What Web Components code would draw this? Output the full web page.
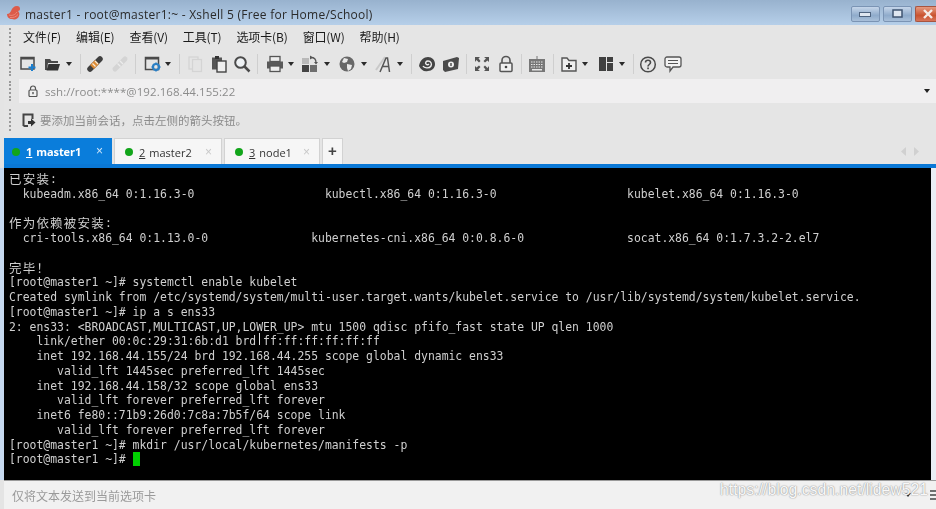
<!DOCTYPE html>
<html>
<head>
<meta charset="utf-8">
<title>Xshell 5</title>
<style>
  html, body { margin: 0; padding: 0; background: #e4e4e4; overflow: hidden; }
  body { font-family: "Noto Sans", "Noto Sans CJK SC", sans-serif; }
</style>
</head>
<body>
<xshell-window>
  <title-bar slot="top">master1 - root@master1:~ - Xshell 5 (Free for Home/School)</title-bar>
  <menu-bar slot="top"></menu-bar>
  <tool-bar slot="top"></tool-bar>
  <address-bar slot="top">ssh://root:****@192.168.44.155:22</address-bar>
  <session-bar slot="top">要添加当前会话，点击左侧的箭头按钮。</session-bar>
  <tab-strip slot="top">
    <session-tab num="1" name="master1" active style="width:108px"></session-tab>
    <session-tab num="2" name="master2" style="width:108px"></session-tab>
    <session-tab num="3" name="node1" style="width:96px"></session-tab>
  </tab-strip>
  <term-view></term-view>
  <compose-bar slot="bottom">仅将文本发送到当前选项卡</compose-bar>
</xshell-window>

<script>
  // shared grip used at the left of each docked bar
  const grip = `<span class="grip"></span>`;
  const gripCss = `
    .grip { width: 2px; align-self: center; border-left: 2px dotted #9a9a9a; margin-left: 5px; flex: none; }
  `;

  class XshellWindow extends HTMLElement {
    constructor() {
      super();
      this.attachShadow({ mode: 'open' });
      this.shadowRoot.innerHTML = `
        <style>
          :host { display: flex; flex-direction: column; width: 936px; height: 509px; overflow: hidden; position: relative; background: #e4e4e4; }
          .body { flex: 1; display: flex; min-height: 0; }
          .edge { width: 4px; background: #c6d9ef; flex: none; }
          .side { width: 5px; background: #e9eef4; flex: none; }
          .main { flex: 1; min-width: 0; }
          .mark { position: absolute; left: 720px; top: 481px; font: 15.8px "Liberation Sans", sans-serif; color: #f8f8f8; text-shadow: 0 0 1.5px #8f8f8f, 0 0 1px #a5a5a5; white-space: nowrap; }
          .wrap { filter: blur(.35px); display: flex; flex-direction: column; height: 100%; }
        </style>
        <div class="wrap">
          <slot name="top"></slot>
          <div class="body">
            <div class="edge"></div>
            <div class="main"><slot></slot></div>
            <div class="side"></div>
          </div>
          <slot name="bottom"></slot>
        </div>
        <div class="mark">https://blog.csdn.net/lidew521</div>
      `;
    }
  }

  class TitleBar extends HTMLElement {
    constructor() {
      super();
      this.attachShadow({ mode: 'open' });
      this.shadowRoot.innerHTML = `
        <style>
          :host { display: flex; align-items: center; height: 25px; flex: none; background: linear-gradient(#98b2ce, #b6cfe9); color: #2a2a2a; font: 12px "Open Sans", sans-serif; box-sizing: border-box; padding-left: 6px; }
          svg.logo { margin-right: 4px; flex: none; }
          .t { flex: 1; white-space: nowrap; letter-spacing: .26px; padding-top: 3px; }
          .btns { display: flex; align-self: flex-start; margin-top: 6px; gap: 3px; }
          .b { width: 29px; height: 16px; box-sizing: border-box; border: 1px solid #7b94b4; border-radius: 2px; background: linear-gradient(#c6d6ea, #8fabcb 60%, #a9c0da); display: flex; align-items: center; justify-content: center; }
          .b.x { width: 21px; border-right: 0; border-radius: 2px 0 0 2px; border-color: #a8543f; background: linear-gradient(#e59a80, #c9532f 60%, #d8755a); justify-content: flex-start; padding-left: 7px; }
        </style>
        <svg class="logo" width="15" height="15" viewBox="0 0 15 15">
          <path d="M1 9c2 0 3-1 4-3 1-3 3-5 6-5 2 0 3 1 3 3 0 1-1 2-2 2 1 1 2 3 1 5-1 3-4 4-7 3-3 0-5-2-5-5z" fill="#dc5b4a"/>
          <path d="M3 10c3 1 6 0 8-3M4 12.500c3 .5 6-.5 8-3" fill="none" stroke="#ee9484" stroke-width=".8"/>
        </svg>
        <span class="t"><slot></slot></span>
        <div class="btns">
          <div class="b"><svg width="13" height="5"><rect x=".5" y=".5" width="11" height="4" fill="#dfe7f1" stroke="#4f6480"/></svg></div>
          <div class="b"><svg width="12" height="10"><rect x="1" y="1" width="9" height="7" fill="#dfe7f1" stroke="#3f5470" stroke-width="1.500"/></svg></div>
          <div class="b x"><svg width="11" height="10"><path d="M1 1l8 8M9 1l-8 8" stroke="#f5ece8" stroke-width="2.400"/></svg></div>
        </div>
      `;
    }
  }

  class MenuBar extends HTMLElement {
    constructor() {
      super();
      this.attachShadow({ mode: 'open' });
      const items = ['文件(F)', '编辑(E)', '查看(V)', '工具(T)', '选项卡(B)', '窗口(W)', '帮助(H)'];
      this.shadowRoot.innerHTML = `
        <style>
          :host { display: flex; align-items: center; height: 23px; flex: none; margin-left: 4px; background: #e5e5e5; font: 12px "Noto Sans CJK SC", "Noto Sans", sans-serif; color: #1b1b1b; }
          ${gripCss}
          .grip { height: 18px; }
          .items { display: flex; gap: 15px; margin-left: 10px; letter-spacing: -.14px; }
        </style>
        ${grip}
        <div class="items">${items.map(i => `<span>${i}</span>`).join('')}</div>
      `;
    }
  }

  // toolbar icons, all drawn on a 18x18 box
  const icons = {
    newsess: `<rect x="2" y="2.500" width="13" height="11.500" fill="none" stroke="#4a4a4a" stroke-width="1.500"/><rect x="2" y="2" width="13" height="2.500" fill="#4a4a4a"/><path d="M13 9v7M9.500 12.500h7" stroke="#1b7fd0" stroke-width="2"/>`,
    open: `<path d="M2 15V4h5l1.500 2H15v2H5l-1 7z" fill="#4a4a4a"/><path d="M3.500 15.500l2-6.500H17l-2 6.500z" fill="#333"/>`,
    edit: `<path d="M4 14L14 4" stroke="#3f3f3f" stroke-width="5.500" stroke-linecap="round"/><path d="M6 12l5-5" stroke="#dc8a34" stroke-width="5.500"/><path d="M6.500 8.500l3 3M9 6l3 3" stroke="#f8ecd6" stroke-width="1.200"/>`,
    plug: `<path d="M4 14L14 4" stroke="#d4d4d4" stroke-width="5" stroke-linecap="round"/><path d="M6.500 8.500l3 3M9 6l3 3" stroke="#ececec" stroke-width="1.200"/>`,
    prefs: `<rect x="1.500" y="2.500" width="13" height="12" fill="none" stroke="#4a4a4a" stroke-width="1.500"/><rect x="1.500" y="2" width="13" height="2.500" fill="#4a4a4a"/><circle cx="12" cy="12" r="3" fill="none" stroke="#2b7fc4" stroke-width="2.200"/><path d="M12 7.500v2M12 14.500v2M7.500 12h2M14.500 12h2" stroke="#2b7fc4" stroke-width="1.500"/>`,
    copy: `<rect x="3" y="2" width="9" height="12" fill="none" stroke="#d4d4d4" stroke-width="1.300"/><rect x="6.500" y="4.500" width="9" height="12" fill="#e4e4e4" stroke="#d4d4d4" stroke-width="1.300"/>`,
    paste: `<rect x="2" y="2.500" width="10" height="12" fill="#555"/><rect x="5" y="1" width="4" height="3" fill="#333"/><rect x="7" y="6" width="9" height="11" fill="#eee" stroke="#444" stroke-width="1.400"/>`,
    search: `<circle cx="7.500" cy="7.500" r="5.300" fill="#eef1f4" stroke="#4a4a4a" stroke-width="2"/><path d="M11.500 11.500l5 5" stroke="#4a4a4a" stroke-width="2.500"/>`,
    print: `<rect x="4" y="1.500" width="10" height="5" fill="#eee" stroke="#555" stroke-width="1.300"/><rect x="1" y="6.500" width="16" height="7" fill="#5a5a5a"/><rect x="4" y="11" width="10" height="5.500" fill="#eee" stroke="#555" stroke-width="1.300"/>`,
    transfer: `<rect x="1" y="3" width="7" height="6" fill="#b9b9b9"/><rect x="1" y="10" width="7" height="7" fill="#444"/><rect x="9" y="10" width="7" height="7" fill="#6e6e6e"/><path d="M10 2.500c3 0 5 2 5 5" fill="none" stroke="#555" stroke-width="1.300"/><path d="M9 .5v4l3-2zM13 7h4l-2 2.500z" fill="#555"/>`,
    globe: `<circle cx="9" cy="9" r="7.500" fill="#686868"/><path d="M6 3l4 1-1 3-3 1-2-1zM9 9l5 1-1 4-3 2-1-3z" fill="#eaeaea"/>`,
    font: `<path d="M2 15L11 2" stroke="#c9c9c9" stroke-width="2"/><path d="M6 17L12 3h1.500l2 14M8.500 11.500h6.500" fill="none" stroke="#555" stroke-width="1.500"/>`,
    shell: `<path d="M1 11c1-6 5-9 9-9 4 0 7 3 7 7 0 4-3 7-7 7-4 1-7-1-9-5z" fill="#444"/><path d="M5 11c1 2 6 3 8 0 1-2 0-5-3-5-2 0-3 2-2 3 1 1 2 1 3 0" fill="none" stroke="#eee" stroke-width="1.400"/>`,
    card: `<path d="M1 6l14-4 2 1-1 11-13 3-2-2z" fill="#4a4a4a"/><circle cx="9" cy="9.500" r="3" fill="#eee"/><path d="M9 8v3" stroke="#444" stroke-width="1.400"/>`,
    full: `<path d="M2 2h5L5.500 3.500 7.500 6 6 7.500 3.500 5 2 7zM16 2v5l-1.500-1.500L12 7.500 10.500 6l2.500-2.500L11 2zM2 16v-5l1.500 1.500L6 10.500 7.500 12 5 14.500 7 16zM16 16h-5l1.500-1.500L10.500 12l1.500-1.500 2.500 2.500L16 11z" fill="#555"/>`,
    lock: `<path d="M5 8V5.500a4 4 0 018 0V8" fill="none" stroke="#555" stroke-width="1.600"/><rect x="3" y="8" width="12" height="8.500" rx="1" fill="#f0f0f0" stroke="#555" stroke-width="1.500"/><circle cx="9" cy="12" r="1.300" fill="#444"/>`,
    keyboard: `<path d="M9 1v4" stroke="#777" stroke-width="1"/><rect x="1" y="4" width="16" height="13" fill="#777"/><path d="M3 7h12M3 9.500h12M3 12h12" stroke="#e8e8e8" stroke-width="1.200" stroke-dasharray="1.500 1"/><rect x="4" y="14" width="10" height="1.500" fill="#e8e8e8"/>`,
    folder: `<path d="M2 3h5l2 2.500h7V16H2z" fill="#eee" stroke="#555" stroke-width="1.400"/><path d="M9 8v6M6 11h6" stroke="#333" stroke-width="1.800"/>`,
    layout: `<rect x="2" y="2" width="7" height="14" fill="#404040"/><rect x="10" y="2" width="6" height="5" fill="#404040"/><rect x="10" y="8" width="6" height="8" fill="#404040"/>`,
    help: `<circle cx="9" cy="9.500" r="7.300" fill="none" stroke="#4a4a4a" stroke-width="1.500"/><path d="M6.500 7.500c0-3 5-3 5 0 0 2-2.500 2-2.500 4" fill="none" stroke="#4a4a4a" stroke-width="1.600"/><rect x="8.200" y="12.500" width="1.700" height="1.700" fill="#4a4a4a"/>`,
    chat: `<path d="M3 2h12a2 2 0 012 2v6a2 2 0 01-2 2H9l-3 4v-4H3a2 2 0 01-2-2V4a2 2 0 012-2z" fill="#f2f2f2" stroke="#555" stroke-width="1.300"/><path d="M4 5.500h10M4 8.500h10" stroke="#555" stroke-width="1.200"/>`
  };

  // [kind, gap before it]
  const toolItems = [
    ['newsess', 0], ['open', 6], ['caret', 4], ['sep', 7],
    ['edit', 5], ['plug', 7], ['sep', 6],
    ['prefs', 8], ['caret', 2], ['sep', 7],
    ['copy', 6], ['paste', 6], ['search', 5], ['sep', 6],
    ['print', 8], ['caret', 3], ['transfer', 6], ['caret', 4], ['globe', 7], ['caret', 4], ['font', 6], ['caret', 4], ['sep', 7],
    ['shell', 6], ['card', 6], ['sep', 6],
    ['full', 6], ['lock', 6], ['sep', 6],
    ['keyboard', 6], ['sep', 7],
    ['folder', 6], ['caret', 3], ['layout', 8], ['caret', 3], ['sep', 7],
    ['help', 5], ['chat', 7]
  ];

  class ToolBar extends HTMLElement {
    constructor() {
      super();
      this.attachShadow({ mode: 'open' });
      const html = toolItems.map(([kind, gap]) => {
        if (kind === 'sep') return `<span class="sep" style="margin-left:${gap}px"></span>`;
        if (kind === 'caret') return `<svg class="caret" style="margin-left:${gap}px" width="8" height="4"><path d="M1 0h6L4 4z" fill="#2a2a2a"/></svg>`;
        return `<svg style="margin-left:${gap}px" width="18" height="18" viewBox="0 0 18 18">${icons[kind]}</svg>`;
      }).join('');
      this.shadowRoot.innerHTML = `
        <style>
          :host { display: flex; align-items: center; height: 31px; flex: none; box-sizing: border-box; padding-top: 1px; margin-left: 4px; background: #e5e5e5; }
          ${gripCss}
          .grip { height: 24px; }
          .items { display: flex; align-items: center; margin-left: 6px; }
          svg { flex: none; display: block; }
          .sep { width: 1px; height: 20px; background: #cfcfcf; flex: none; }
        </style>
        ${grip}
        <div class="items">${html}</div>
      `;
    }
  }

  class AddressBar extends HTMLElement {
    constructor() {
      super();
      this.attachShadow({ mode: 'open' });
      this.shadowRoot.innerHTML = `
        <style>
          :host { display: flex; align-items: center; height: 24px; flex: none; margin-left: 4px; background: #e5e5e5; font: 11.5px "Open Sans", sans-serif; color: #8b8b8b; }
          ${gripCss}
          .grip { height: 20px; }
          .in { flex: 1; height: 100%; margin-left: 6px; background: #f0eff0; display: flex; align-items: center; padding-left: 9px; }
          svg.l { margin-right: 7px; }
          .t { flex: 1; letter-spacing: .06px; padding-top: 1px; }
          svg.c { margin-right: 6px; }
        </style>
        ${grip}
        <div class="in">
          <svg class="l" width="10" height="12" viewBox="0 0 10 12"><path d="M2.500 5V3.500a2.500 2.500 0 015 0V5" fill="none" stroke="#555" stroke-width="1.200"/><rect x="1" y="5" width="8" height="6.500" rx="1" fill="#f0f0f0" stroke="#555" stroke-width="1.200"/><rect x="4.300" y="7" width="1.400" height="2.200" fill="#555"/></svg>
          <span class="t"><slot></slot></span>
          <svg class="c" width="6" height="4"><path d="M0 0h6L3 4z" fill="#222"/></svg>
        </div>
      `;
    }
  }

  class SessionBar extends HTMLElement {
    constructor() {
      super();
      this.attachShadow({ mode: 'open' });
      this.shadowRoot.innerHTML = `
        <style>
          :host { display: flex; align-items: center; height: 34px; flex: none; margin-left: 4px; background: #e5e5e5; font: 11.5px "Noto Sans CJK SC", sans-serif; color: #8c8c8c; }
          ${gripCss}
          .grip { height: 22px; }
          svg { margin: 0 4px 0 9px; flex: none; }
        </style>
        ${grip}
        <svg width="14" height="14" viewBox="0 0 14 14"><path d="M1.500 13V1.500h9V6M1.500 13H6" fill="none" stroke="#444" stroke-width="2"/><path d="M6 8h3V5.500l4.500 4-4.500 4V11H6z" fill="#333"/></svg>
        <span><slot></slot></span>
      `;
    }
  }

  class SessionTab extends HTMLElement {
    constructor() {
      super();
      this.attachShadow({ mode: 'open' });
      const on = this.hasAttribute('active');
      this.shadowRoot.innerHTML = `
        <style>
          :host { display: flex; align-items: center; box-sizing: border-box; height: 26px; padding-left: ${on ? 8 : 10}px; background: ${on ? '#0a7ddb' : '#f6f6f6'}; color: ${on ? '#fff' : '#333'}; font: ${on ? 'bold ' : ''}11px "Open Sans", sans-serif; flex: none; ${on ? '' : 'border: 1px solid #d2d2d2; border-bottom: 0;'} }
          .dot { width: 8px; height: 8px; border-radius: 50%; background: #12a51a; margin: 1px 6px 0 0; flex: none; }
          .n { text-decoration: underline; margin-right: 4px; padding-top: 1px; }
          .name { flex: 1; white-space: nowrap; padding-top: 1px; ${on ? 'letter-spacing: -.1px;' : ''} }
          .x { font: 12px "Liberation Sans", sans-serif; color: ${on ? '#cfe6fa' : '#c8c8c8'}; margin-right: 9px; }
        </style>
        <span class="dot"></span>
        <span class="n">${this.getAttribute('num')}</span>
        <span class="name">${this.getAttribute('name')}</span>
        <span class="x">×</span>
      `;
    }
  }

  class TabStrip extends HTMLElement {
    constructor() {
      super();
      this.attachShadow({ mode: 'open' });
      this.shadowRoot.innerHTML = `
        <style>
          :host { display: block; flex: none; margin-left: 4px; background: #e5e5e5; padding-top: 1px; }
          .row { display: flex; align-items: flex-end; gap: 2px; height: 26px; }
          .add { width: 21px; height: 26px; box-sizing: border-box; background: #f6f6f6; border: 1px solid #d2d2d2; border-bottom: 0; font: bold 15px "Liberation Sans", sans-serif; color: #444; text-align: center; line-height: 23px; }
          .nav { margin-left: auto; margin-right: 17px; align-self: center; display: flex; gap: 8px; }
          .line { height: 4px; background: #0a78d6; }
        </style>
        <div class="row">
          <slot></slot>
          <div class="add">+</div>
          <div class="nav">
            <svg width="5" height="9"><path d="M5 0v9L0 4.500z" fill="#d0d0d0"/></svg>
            <svg width="5" height="9"><path d="M0 0v9l5-4.500z" fill="#d0d0d0"/></svg>
          </div>
        </div>
        <div class="line"></div>
      `;
    }
  }

  const termLines = [
    '<b>已安装</b>:',
    '  kubeadm.x86_64 0:1.16.3-0                   kubectl.x86_64 0:1.16.3-0                   kubelet.x86_64 0:1.16.3-0',
    '',
    '<b>作为依赖被安装</b>:',
    '  cri-tools.x86_64 0:1.13.0-0               kubernetes-cni.x86_64 0:0.8.6-0               socat.x86_64 0:1.7.3.2-2.el7',
    '',
    '<b>完毕！</b>',
    '[root@master1 ~]# systemctl enable kubelet',
    'Created symlink from /etc/systemd/system/multi-user.target.wants/kubelet.service to /usr/lib/systemd/system/kubelet.service.',
    '[root@master1 ~]# ip a s ens33',
    '2: ens33: &lt;BROADCAST,MULTICAST,UP,LOWER_UP&gt; mtu 1500 qdisc pfifo_fast state UP qlen 1000',
    '    link/ether 00:0c:29:31:6b:d1 brd ff:ff:ff:ff:ff:ff',
    '    inet 192.168.44.155/24 brd 192.168.44.255 scope global dynamic ens33',
    '       valid_lft 1445sec preferred_lft 1445sec',
    '    inet 192.168.44.158/32 scope global ens33',
    '       valid_lft forever preferred_lft forever',
    '    inet6 fe80::71b9:26d0:7c8a:7b5f/64 scope link',
    '       valid_lft forever preferred_lft forever',
    '[root@master1 ~]# mkdir /usr/local/kubernetes/manifests -p',
    '[root@master1 ~]# <i></i>'
  ];

  class TermView extends HTMLElement {
    constructor() {
      super();
      this.attachShadow({ mode: 'open' });
      this.shadowRoot.innerHTML = `
        <style>
          :host { display: block; height: 100%; background: #000; color: #cfcfcf; font: 11.42px "DejaVu Sans Mono", "Liberation Mono", monospace; box-sizing: border-box; padding: 4px 0 0 5px; position: relative; overflow: hidden; }
          .l { height: 14.75px; line-height: 14.75px; white-space: pre; }
          b { font: 12.5px "Noto Sans CJK SC", sans-serif; line-height: 0; letter-spacing: 1.2px; vertical-align: -1px; }
          i { display: inline-block; width: 7px; height: 14px; background: #00d000; vertical-align: -3px; }
          .beam { position: absolute; left: 255px; top: 165px; width: 1px; height: 12px; background: #ddd; }
        </style>
        ${termLines.map(l => `<div class="l">${l}</div>`).join('')}
        <div class="beam"></div>
      `;
    }
  }

  class ComposeBar extends HTMLElement {
    constructor() {
      super();
      this.attachShadow({ mode: 'open' });
      this.shadowRoot.innerHTML = `
        <style>
          :host { display: flex; align-items: center; height: 29px; flex: none; box-sizing: border-box; margin-left: 4px; padding-left: 8px; background: #f1f1f1; border-top: 1px solid #9a9a9a; font: 12px "Noto Sans CJK SC", sans-serif; color: #9a9a9a; }
          .t { flex: 1; }
          svg.c { margin-right: 19px; }
        </style>
        <span class="t"><slot></slot></span>
        <svg class="c" width="6" height="4"><path d="M0 0h6L3 4z" fill="#222"/></svg>
        <svg width="6" height="10"><path d="M0 1h6M0 5h6M0 9h6" stroke="#444" stroke-width="1.500"/></svg>
      `;
    }
  }

  customElements.define('xshell-window', XshellWindow);
  customElements.define('title-bar', TitleBar);
  customElements.define('menu-bar', MenuBar);
  customElements.define('tool-bar', ToolBar);
  customElements.define('address-bar', AddressBar);
  customElements.define('session-bar', SessionBar);
  customElements.define('session-tab', SessionTab);
  customElements.define('tab-strip', TabStrip);
  customElements.define('term-view', TermView);
  customElements.define('compose-bar', ComposeBar);
</script>
</body>
</html>
